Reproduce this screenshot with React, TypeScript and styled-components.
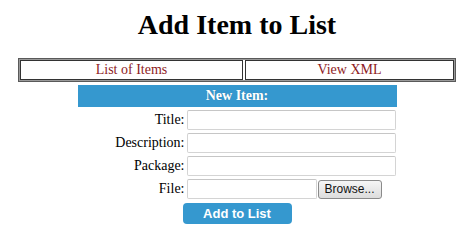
import React from "react";
import styled, { createGlobalStyle } from "styled-components";

const Global = createGlobalStyle`
  html, body { margin: 0; padding: 0; background: #fff; }
  body { font-family: "Liberation Serif", "Times New Roman", serif; color: #000; }
`;

const Page = styled.div`
  width: 474px;
  display: flex;
  flex-direction: column;
  align-items: center;
`;

const Title = styled.h1`
  margin: 9px 0 0 0;
  font-size: 28px;
  line-height: 31px;
  font-weight: bold;
  text-align: center;
`;

const Nav = styled.div`
  margin-top: 18px;
  width: 438px;
  box-sizing: border-box;
  border: 1px solid #5a5a5a;
  box-shadow: inset 0 0 0 1px #9a9a9a;
  padding: 1px;
  display: grid;
  grid-template-columns: 223px 1fr;
  gap: 2px;
`;

const NavCell = styled.a`
  display: block;
  border: 1px solid #333;
  height: 18px;
  line-height: 18px;
  text-align: center;
  font-size: 14px;
  color: #8e1b24;
  text-decoration: none;
`;

const Form = styled.div`
  margin-top: 3px;
  width: 319px;
  display: flex;
  flex-direction: column;
  align-items: stretch;
`;

const Header = styled.div`
  background: #3598cf;
  color: #fff;
  font-weight: bold;
  font-size: 14px;
  height: 22px;
  line-height: 22px;
  text-align: center;
  text-shadow: 0 0 1px rgba(0,0,0,0.2);
`;

const Row = styled.div`
  display: grid;
  grid-template-columns: 107px 1fr;
  column-gap: 2px;
  align-items: center;
  margin-top: 3px;
`;

const Label = styled.label`
  text-align: right;
  font-size: 14px;
`;

const Input = styled.input`
  box-sizing: border-box;
  width: 209px;
  height: 20px;
  border: 1px solid #d4d4d4;
  border-top-color: #c6c6c6;
  border-radius: 2px;
  background: #fff;
  padding: 0 3px;
  outline: none;
`;

const FileWrap = styled.div`
  display: flex;
  align-items: center;
  gap: 1px;
`;

const FileInput = styled(Input)`
  width: 130px;
`;

const Browse = styled.button`
  box-sizing: border-box;
  width: 64px;
  height: 19px;
  padding: 0;
  font-family: "Liberation Sans", Arial, sans-serif;
  font-size: 12px;
  color: #111;
  border: 1px solid #8a8a8a;
  border-radius: 3px;
  background: linear-gradient(#f6f6f6, #dcdcdc);
`;

const SubmitRow = styled.div`
  display: flex;
  margin-top: 4px;
  padding-left: 105px;
`;

const Submit = styled.button`
  box-sizing: border-box;
  width: 109px;
  height: 21px;
  border: none;
  border-radius: 4px;
  background: #3598cf;
  color: #fff;
  font-family: "Liberation Sans", Arial, sans-serif;
  font-weight: bold;
  font-size: 13px;
  padding: 0;
`;

export default function App() {
  return (
    <>
      <Global />
      <Page>
        <Title>Add Item to List</Title>
        <Nav>
          <NavCell href="#">List of Items</NavCell>
          <NavCell href="#">View XML</NavCell>
        </Nav>
        <Form>
          <Header>New Item:</Header>
          <Row>
            <Label>Title:</Label>
            <Input />
          </Row>
          <Row>
            <Label>Description:</Label>
            <Input />
          </Row>
          <Row>
            <Label>Package:</Label>
            <Input />
          </Row>
          <Row>
            <Label>File:</Label>
            <FileWrap>
              <FileInput />
              <Browse>Browse...</Browse>
            </FileWrap>
          </Row>
          <SubmitRow>
            <Submit>Add to List</Submit>
          </SubmitRow>
        </Form>
      </Page>
    </>
  );
}
